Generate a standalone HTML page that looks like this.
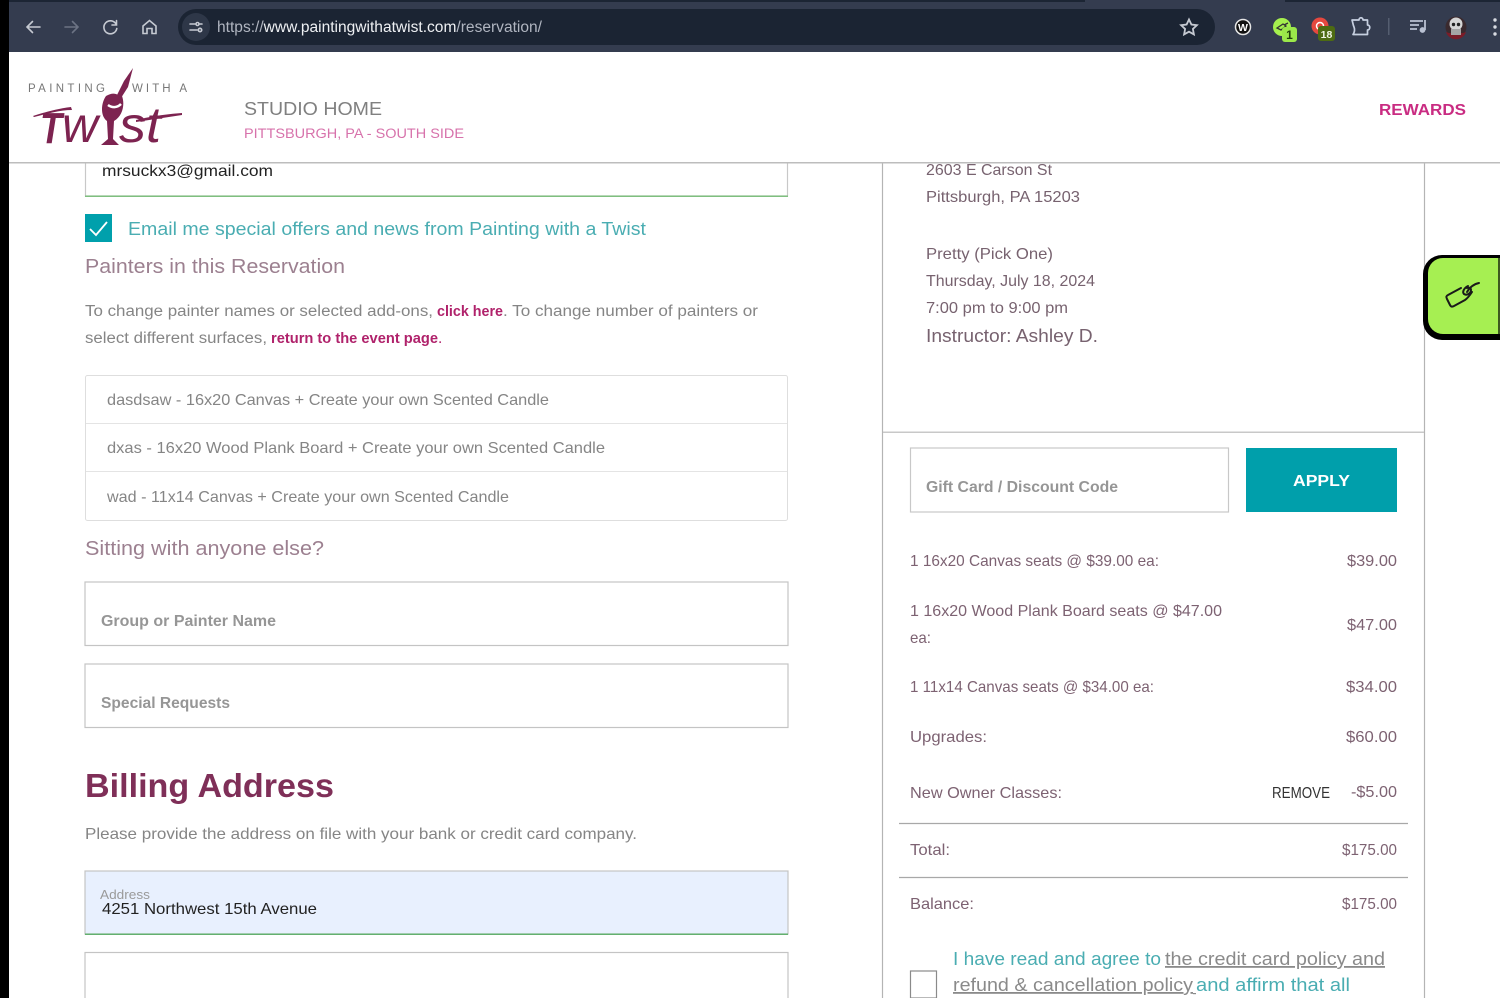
<!DOCTYPE html>
<html lang="en"><head><meta charset="utf-8"><title>Reservation</title>
<style>
html,body{margin:0;padding:0;background:#fff;width:1500px;height:998px;overflow:hidden}
svg{display:block;position:absolute;left:0;top:0}
text{font-family:"Liberation Sans",Arial,sans-serif}
</style></head><body>
<svg width="1500" height="998" viewBox="0 0 1500 998" xmlns="http://www.w3.org/2000/svg">
<rect width="1500" height="998" fill="#fff"/>
<!-- browser chrome -->
<rect x="0" y="0" width="1500" height="52" fill="#343c4f"/>
<rect x="0" y="0" width="1085" height="2" fill="#1c2534"/>
<rect x="1285" y="0" width="215" height="2" fill="#1c2534"/>
<rect x="0" y="0" width="9" height="998" fill="#000"/>
<rect x="178" y="9" width="1037" height="36" rx="18" fill="#1b2433"/>
<circle cx="196" cy="27" r="14" fill="#2e3748"/>
<g fill="none" stroke="#c6cad2" stroke-width="1.600" stroke-linecap="round">
<path d="M40 27H27M32.500 21.500L27 27l5.500 5.500"/>
<path d="M78 27H65M72.500 21.500L78 27l-5.500 5.500" stroke="#6c7384"/>
<path d="M116 24a6.500 6.500 0 1 0 .8 4.500M116.500 20.500V25H112"/>
<path d="M143 26l6.500-5.500 6.500 5.500v7.500h-4v-5h-5v5h-4z"/>
<path d="M190 24h5M190 30h7M199 24h3"/><circle cx="200" cy="30" r="1.700"/><circle cx="197.500" cy="24" r="1.500"/>
<path d="M1189 19.500l2.400 5 5.500.7-4 3.800 1 5.400-4.900-2.700-4.900 2.700 1-5.400-4-3.800 5.500-.7z" stroke-width="1.800"/>
</g>
<text x="217" y="32" font-size="15.500" fill="#b0b5c0" textLength="325" lengthAdjust="spacingAndGlyphs">https://<tspan fill="#eef0f3">www.paintingwithatwist.com</tspan>/reservation/</text>
<!-- extensions -->
<circle cx="1243" cy="27" r="7.500" fill="#111" stroke="#e6e6e6" stroke-width="1.500"/>
<text x="1243" y="31" font-size="10.500" font-weight="bold" fill="#fff" text-anchor="middle">W</text>
<circle cx="1282" cy="27" r="9" fill="#a5f04e"/>
<path d="M1277 28l6-4 3 2-5 4zM1284 25l4-2" fill="none" stroke="#333" stroke-width="1.300"/>
<rect x="1282" y="27" width="15" height="15" rx="3" fill="#9be84a"/>
<text x="1289.500" y="39" font-size="12" font-weight="bold" fill="#22400c" text-anchor="middle">1</text>
<circle cx="1320" cy="26" r="8.500" fill="#e5483f"/>
<circle cx="1320" cy="26" r="3.500" fill="none" stroke="#fff" stroke-width="1.500"/>
<rect x="1318" y="26" width="17" height="15" rx="3" fill="#4d6b12"/>
<text x="1326.500" y="38" font-size="10.500" font-weight="bold" fill="#f0f4e6" text-anchor="middle">18</text>
<path d="M1352 20h7c0-3 4-3 4 0h4.500v5c3 0 3 5 0 5v4.500H1353c2-3 2-5 1-7.500-1-2-1-4-2-7z" fill="none" stroke="#c6cfe0" stroke-width="1.700" stroke-linejoin="round"/>
<rect x="1388" y="18" width="1.500" height="17" fill="#555e70"/>
<g fill="none" stroke="#b9c1d2" stroke-width="1.800">
<path d="M1410 21h13M1410 25h9M1410 29h7"/><path d="M1425 20v10"/><circle cx="1422.500" cy="30" r="2" fill="#b9c1d2"/>
</g>
<circle cx="1456" cy="27" r="10.500" fill="#3a2a2e"/>
<path d="M1446 32a10.500 10.500 0 0 0 20 0l-3 1h-14z" fill="#7a1c28"/>
<circle cx="1456" cy="24" r="6.500" fill="#d5d5d5"/><rect x="1451" y="29" width="10" height="6" fill="#a5a5a5"/>
<circle cx="1453.500" cy="24.500" r="1.700" fill="#222"/><circle cx="1458.500" cy="24.500" r="1.700" fill="#222"/>
<circle cx="1495" cy="20" r="1.700" fill="#d8dbe2"/><circle cx="1495" cy="27" r="1.700" fill="#d8dbe2"/><circle cx="1495" cy="34" r="1.700" fill="#d8dbe2"/>

<!-- left column: email -->
<path d="M85.500 163v33h702v-33" fill="none" stroke="#c8c8c8" stroke-width="1.200"/>
<rect x="85" y="195.500" width="703" height="1.500" fill="#7fbf7f"/>
<text x="102" y="176" font-size="16" fill="#222" textLength="171" lengthAdjust="spacingAndGlyphs">mrsuckx3@gmail.com</text>
<rect x="85" y="214" width="27" height="28" fill="#00a0ac"/>
<path d="M90 229l6 6 11-13" fill="none" stroke="#fff" stroke-width="1.800"/>
<text x="128" y="235" font-size="18" fill="#4aadb2" textLength="518" lengthAdjust="spacingAndGlyphs">Email me special offers and news from Painting with a Twist</text>
<text x="85" y="273" font-size="20" fill="#9c8090" textLength="260" lengthAdjust="spacingAndGlyphs">Painters in this Reservation</text>
<g font-size="15.500" fill="#858585">
<text x="85" y="316" textLength="348" lengthAdjust="spacingAndGlyphs">To change painter names or selected add-ons,</text>
<text x="437" y="316" font-size="14.500" fill="#b0226b" font-weight="bold" textLength="66" lengthAdjust="spacingAndGlyphs">click here</text>
<text x="503" y="316" textLength="255" lengthAdjust="spacingAndGlyphs">. To change number of painters or</text>
<text x="85" y="343" textLength="182" lengthAdjust="spacingAndGlyphs">select different surfaces,</text>
<text x="271" y="343" font-size="14.500" fill="#b0226b" font-weight="bold" textLength="167" lengthAdjust="spacingAndGlyphs">return to the event page</text>
<text x="438" y="343" fill="#b0226b">.</text>
</g>
<!-- list -->
<rect x="85.500" y="375.500" width="702" height="145" rx="2" fill="#fff" stroke="#dedede"/>
<path d="M86 423.500h701M86 471.500h701" stroke="#e4e4e4"/>
<g font-size="16" fill="#858585">
<text x="107" y="405" textLength="442" lengthAdjust="spacingAndGlyphs">dasdsaw - 16x20 Canvas + Create your own Scented Candle</text>
<text x="107" y="453" textLength="498" lengthAdjust="spacingAndGlyphs">dxas - 16x20 Wood Plank Board + Create your own Scented Candle</text>
<text x="107" y="502" textLength="402" lengthAdjust="spacingAndGlyphs">wad - 11x14 Canvas + Create your own Scented Candle</text>
</g>
<text x="85" y="555" font-size="20" fill="#9c8090" textLength="239" lengthAdjust="spacingAndGlyphs">Sitting with anyone else?</text>
<rect x="85" y="582" width="703" height="63.500" fill="#fff" stroke="#c4c4c4" stroke-width="1.200"/>
<text x="101" y="626" font-size="16" font-weight="bold" fill="#969696" textLength="175" lengthAdjust="spacingAndGlyphs">Group or Painter Name</text>
<rect x="85" y="664" width="703" height="63.500" fill="#fff" stroke="#c4c4c4" stroke-width="1.200"/>
<text x="101" y="708" font-size="16" font-weight="bold" fill="#969696" textLength="129" lengthAdjust="spacingAndGlyphs">Special Requests</text>
<text x="85" y="797" font-size="33" font-weight="bold" fill="#7f2f58" textLength="249" lengthAdjust="spacingAndGlyphs">Billing Address</text>
<text x="85" y="839" font-size="16" fill="#858585" textLength="552" lengthAdjust="spacingAndGlyphs">Please provide the address on file with your bank or credit card company.</text>
<rect x="85" y="871" width="703" height="63" fill="#e8f0fe" stroke="#c4c4c4" stroke-width="1.200"/>
<rect x="85" y="933.500" width="703" height="1.500" fill="#63b06f"/>
<text x="100" y="899" font-size="13" fill="#9a9a9a" textLength="50" lengthAdjust="spacingAndGlyphs">Address</text>
<text x="102" y="914" font-size="16" fill="#222" textLength="215" lengthAdjust="spacingAndGlyphs">4251 Northwest 15th Avenue</text>
<rect x="85" y="952.500" width="703" height="60" fill="#fff" stroke="#c4c4c4" stroke-width="1.200"/>

<!-- right column -->
<path d="M882.500 160V998M1424.500 160V998" stroke="#b4b4b4" stroke-width="1.200"/>
<rect x="883" y="431.500" width="541" height="1.500" fill="#c8c8c8"/>
<g font-size="16" fill="#77626f">
<text x="926" y="175" textLength="126" lengthAdjust="spacingAndGlyphs">2603 E Carson St</text>
<text x="926" y="202" textLength="154" lengthAdjust="spacingAndGlyphs">Pittsburgh, PA 15203</text>
<text x="926" y="259" textLength="127" lengthAdjust="spacingAndGlyphs">Pretty (Pick One)</text>
<text x="926" y="286" textLength="169" lengthAdjust="spacingAndGlyphs">Thursday, July 18, 2024</text>
<text x="926" y="313" textLength="142" lengthAdjust="spacingAndGlyphs">7:00 pm to 9:00 pm</text>
<text x="926" y="342" font-size="18" textLength="172" lengthAdjust="spacingAndGlyphs">Instructor: Ashley D.</text>
</g>
<rect x="910.500" y="448" width="318" height="64" fill="#fff" stroke="#c8c8c8" stroke-width="1.200"/>
<text x="926" y="492" font-size="16" font-weight="bold" fill="#969696" textLength="192" lengthAdjust="spacingAndGlyphs">Gift Card / Discount Code</text>
<rect x="1246" y="448" width="151" height="64" fill="#009fab"/>
<text x="1293" y="486" font-size="15.500" font-weight="bold" fill="#fff" textLength="57" lengthAdjust="spacingAndGlyphs">APPLY</text>
<g font-size="16" fill="#7d6272">
<text x="910" y="566" textLength="249" lengthAdjust="spacingAndGlyphs">1 16x20 Canvas seats @ $39.00 ea:</text>
<text x="1347" y="566" textLength="50" lengthAdjust="spacingAndGlyphs">$39.00</text>
<text x="910" y="616" textLength="312" lengthAdjust="spacingAndGlyphs">1 16x20 Wood Plank Board seats @ $47.00</text>
<text x="910" y="643" textLength="21" lengthAdjust="spacingAndGlyphs">ea:</text>
<text x="1347" y="630" textLength="50" lengthAdjust="spacingAndGlyphs">$47.00</text>
<text x="910" y="692" textLength="244" lengthAdjust="spacingAndGlyphs">1 11x14 Canvas seats @ $34.00 ea:</text>
<text x="1346" y="692" textLength="51" lengthAdjust="spacingAndGlyphs">$34.00</text>
<text x="910" y="742" textLength="77" lengthAdjust="spacingAndGlyphs">Upgrades:</text>
<text x="1346" y="742" textLength="51" lengthAdjust="spacingAndGlyphs">$60.00</text>
<text x="910" y="798" textLength="152" lengthAdjust="spacingAndGlyphs">New Owner Classes:</text>
<text x="1272" y="798" fill="#333" textLength="58" lengthAdjust="spacingAndGlyphs">REMOVE</text>
<text x="1351" y="797" textLength="46" lengthAdjust="spacingAndGlyphs">-$5.00</text>
<text x="910" y="855" textLength="40" lengthAdjust="spacingAndGlyphs">Total:</text>
<text x="1342" y="855" textLength="55" lengthAdjust="spacingAndGlyphs">$175.00</text>
<text x="910" y="909" textLength="64" lengthAdjust="spacingAndGlyphs">Balance:</text>
<text x="1342" y="909" textLength="55" lengthAdjust="spacingAndGlyphs">$175.00</text>
</g>
<path d="M899 823.500h509M899 877.500h509" stroke="#a8a8a8" stroke-width="1.200"/>
<rect x="910.500" y="971" width="26" height="27" fill="#fff" stroke="#8a8a8a" stroke-width="1.200"/>
<g font-size="18" fill="#4aadb2">
<text x="953" y="965" textLength="208" lengthAdjust="spacingAndGlyphs">I have read and agree to</text>
<text x="1165" y="965" fill="#8a8a8a" text-decoration="underline" textLength="220" lengthAdjust="spacingAndGlyphs">the credit card policy and</text>
<text x="953" y="991" fill="#8a8a8a" text-decoration="underline" textLength="240" lengthAdjust="spacingAndGlyphs">refund &amp; cancellation policy</text>
<rect x="1193" y="993" width="3" height="1.200" fill="#8a8a8a"/>
<text x="1196" y="991" textLength="154" lengthAdjust="spacingAndGlyphs">and affirm that all</text>
</g>

<!-- header -->
<rect x="9" y="52" width="1491" height="110" fill="#fff"/>
<rect x="9" y="162" width="1491" height="1.500" fill="#bdbdbd"/>
<text x="28" y="92" font-size="11.500" fill="#777" textLength="77" lengthAdjust="spacing">PAINTING</text>
<text x="132" y="92" font-size="11.500" fill="#777" textLength="55" lengthAdjust="spacing">WITH A</text>
<g fill="#7d2350">
<text x="40" y="143" font-family="Liberation Serif" font-style="italic" font-weight="bold" font-size="44" textLength="22" lengthAdjust="spacingAndGlyphs">T</text>
<text x="62" y="142" font-family="Liberation Serif" font-style="italic" font-size="50" textLength="36" lengthAdjust="spacingAndGlyphs">w</text>
<text x="119" y="142" font-family="Liberation Serif" font-style="italic" font-size="50" textLength="42" lengthAdjust="spacingAndGlyphs">st</text>
<path d="M133 68l-5 19-7 11-4-3 7-14z"/>
<path d="M106 96c5-3 9-3 12-1l4 1c3 8 1 20-8 25l-1 18 6 6h-18l7-6-1-18c-7-5-6-18-1-25z"/>
<path d="M33 116c12-4 28-8 38-9l1 3c-12 0-26 4-38 7z"/>
<path d="M136 120c12-3 30-6 46-7v2l-46 7z"/>
</g>
<path d="M108 105c4 3 9 3 13-1" fill="none" stroke="#fff" stroke-width="2.500"/>
<text x="244" y="115" font-size="18.500" fill="#808080" textLength="138" lengthAdjust="spacingAndGlyphs">STUDIO HOME</text>
<text x="244" y="138" font-size="13.500" fill="#d772ab" textLength="220" lengthAdjust="spacingAndGlyphs">PITTSBURGH, PA - SOUTH SIDE</text>
<text x="1379" y="115" font-size="15.500" font-weight="bold" fill="#c92c82" textLength="87" lengthAdjust="spacingAndGlyphs">REWARDS</text>

<!-- side tab -->
<path d="M1500 255h-58a19 19 0 0 0-19 19v47a19 19 0 0 0 19 19h58z" fill="#000"/>
<path d="M1498 258h-55a15 15 0 0 0-15 15v46a15 15 0 0 0 15 15h55z" fill="#a6ef52"/>
<rect x="1498" y="258" width="2" height="76" fill="#3d5a20"/>
<g fill="none" stroke="#1a1a1a" stroke-width="2" stroke-linecap="round" stroke-linejoin="round">
<path d="M1461 288l-13 7c-2 1-2 2-1 4l3 6c1 2 2 2 4 1l11-6c3-2 5-5 7-8"/>
<path d="M1468 286c-4 2-6 6-4 8 3 2 7-1 7-4 0-2-2-3-4-2"/>
<path d="M1467 292c3-5 7-8 12-9"/>
</g>
</svg>
</body></html>
